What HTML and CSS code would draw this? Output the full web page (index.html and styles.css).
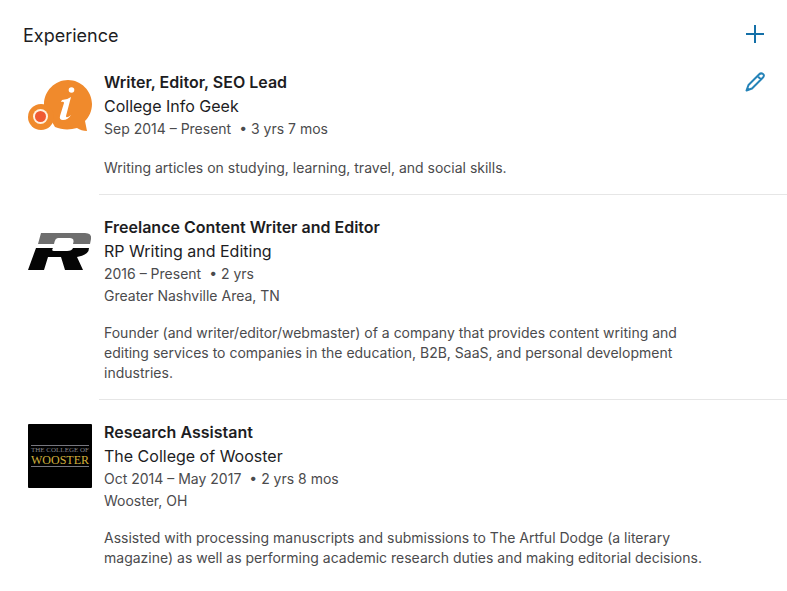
FILE: index.html
```html
<!DOCTYPE html>
<html lang="en">
<head>
  <meta charset="UTF-8" />
  <meta name="viewport" content="width=device-width, initial-scale=1" />
  <title>Experience</title>
  <link rel="stylesheet" href="styles.css">
</head>
<body>
  <section class="experience">
    <header class="header">
      <h2>Experience</h2>
      <button type="button" class="icon-button" aria-label="Add experience">
        <svg width="20" height="20" viewBox="0 0 20 20" fill="none" stroke="#1470a8" stroke-width="2">
          <path d="M10 1v18M1 10h18" />
        </svg>
      </button>
    </header>

    <ul class="jobs">
      <li class="job">
        <svg class="logo" viewBox="0 0 64 64" aria-hidden="true">
          <path fill="#f08a2c" d="M40 2C53 2 64 13 64 26c0 7-3 13-7 17l2 10c-4 0-7-1-10-3-7 2-15 2-22-1L16 30V26C16 13 27 2 40 2z" />
          <circle cx="13" cy="39" r="13" fill="#f08a2c" />
          <circle cx="12.500" cy="38.500" r="7.500" fill="#fff1df" />
          <circle cx="12.500" cy="38.500" r="5.500" fill="#f05a32" />
          <circle cx="43.500" cy="12" r="2.800" fill="#fff" />
          <path fill="#fff" d="M34 22q5 0 9-3l-5 19q0 3 5-1-3 5-8 5-4 0-3-4l4-13q0-2-3-1z" />
        </svg>
        <div class="details">
          <h3>Writer, Editor, SEO Lead</h3>
          <p class="company">College Info Geek</p>
          <p class="dates"><span>Sep 2014 – Present</span><span>• 3 yrs 7 mos</span></p>
          <p class="description">Writing articles on studying, learning, travel, and social skills.</p>
        </div>
        <button type="button" class="icon-button" aria-label="Edit Writer, Editor, SEO Lead">
          <svg width="20" height="20" viewBox="0 0 20 20" fill="none" stroke="#2583b8" stroke-width="2" stroke-linejoin="round">
            <path d="M1.500 18.500L3.500 13 14 2.500Q16 .5 18 2T17.500 6L7 16.500zM12.500 4l3.500 3.500" />
            <path d="M1 19l1.500-4L5 17.500z" fill="#2583b8" stroke="none" />
          </svg>
        </button>
      </li>

      <li class="job">
        <svg class="logo" viewBox="0 0 64 64" aria-hidden="true">
          <path fill="#6e6e6e" d="M13 14h44q7 0 6 6l-1 5H45q2-6-3-6H30q-3 0-4 6H10z" />
          <path fill="#050505" d="M8 29h17q-2 3 1 3h13q5 0 6-3h16q0 7-12 9l6 13H37l-4-13H20l-4 13H0z" />
        </svg>
        <div class="details">
          <h3>Freelance Content Writer and Editor</h3>
          <p class="company">RP Writing and Editing</p>
          <p class="dates"><span>2016 – Present</span><span>• 2 yrs</span></p>
          <p class="location">Greater Nashville Area, TN</p>
          <p class="description">Founder (and writer/editor/webmaster) of a company that provides content writing and editing services to companies in the education, B2B, SaaS, and personal development industries.</p>
        </div>
      </li>

      <li class="job">
        <svg class="logo" viewBox="0 0 64 64" aria-hidden="true">
          <rect width="64" height="64" rx="1" fill="#000" />
          <path d="M3 21.500h58M3 42.500h58" stroke="#77777f" />
          <text class="logo-small" x="32" y="28" text-anchor="middle">THE COLLEGE OF</text>
          <text class="logo-name" x="32" y="40" text-anchor="middle">WOOSTER</text>
        </svg>
        <div class="details">
          <h3>Research Assistant</h3>
          <p class="company">The College of Wooster</p>
          <p class="dates"><span>Oct 2014 – May 2017</span><span>• 2 yrs 8 mos</span></p>
          <p class="location">Wooster, OH</p>
          <p class="description">Assisted with processing manuscripts and submissions to The Artful Dodge (a literary magazine) as well as performing academic research duties and making editorial decisions.</p>
        </div>
      </li>
    </ul>
  </section>
</body>
</html>
```
FILE: styles.css
```css
body {
  margin: 0;
  background: #fff;
  color: #1d1d1f;
  font-family: Inter, "Liberation Sans", sans-serif;
}

h2, h3, p, ul {
  margin: 0;
  padding: 0;
}

.experience {
  padding-top: 20px;
}

.header {
  display: flex;
  justify-content: space-between;
  padding: 0 20px 18px 23px;
}

h2 {
  font-size: 18px;
  font-weight: 400;
  line-height: 32px;
}

.icon-button {
  display: flex;
  align-items: center;
  justify-content: center;
  width: 24px;
  height: 28px;
  padding: 0;
  border: none;
  background: none;
  cursor: pointer;
}

.job .icon-button {
  height: 24px;
}

.jobs {
  list-style: none;
}

.job {
  display: grid;
  grid-template-columns: 64px 1fr 24px;
  column-gap: 12px;
  padding: 0 20px 16px 28px;
}

.job + .job {
  padding-top: 20px;
  border-top: 1px solid #e6e6e6;
  border-image: linear-gradient(to right, transparent 100px, #e6e6e6 100px) 1;
}

.logo {
  width: 64px;
  height: 64px;
  margin-top: 8px;
}

.job + .job .logo {
  margin-top: 4px;
}

.details {
  max-width: 600px;
}

h3, .company {
  font-size: 16px;
  line-height: 24px;
}

h3 {
  font-weight: 600;
}

.dates, .location, .description {
  color: #4b4b4d;
  font-size: 14px;
}

.dates, .location {
  line-height: 22px;
}

.dates {
  display: flex;
  gap: 8px;
}

.description {
  margin-top: 16px;
  line-height: 20px;
}

.dates + .description {
  margin-top: 18px;
}

.logo-small {
  fill: #85858c;
  font: 7px "Liberation Serif", serif;
}

.logo-name {
  fill: #d2b03c;
  font: 12px "Liberation Serif", serif;
}
```
